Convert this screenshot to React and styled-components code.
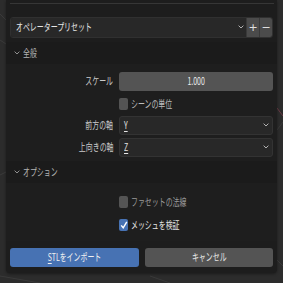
import React from 'react'
import styled, { createGlobalStyle } from 'styled-components'

const GlobalStyle = createGlobalStyle`
    html, body {
        margin: 0;
        padding: 0;
        background: #2b2b2b;
        font-family: "Noto Sans CJK JP", "Noto Sans", sans-serif;
        overflow: hidden;
    }
`;

const Viewport = styled.div`
    width: 283px;
    height: 283px;
    position: relative;
    background: #2c2c2c;
    overflow: hidden;
`;

const Grid = styled.svg`
    position: absolute;
    inset: 0;
`;

const Dialog = styled.div`
    position: relative;
    margin-left: 6px;
    width: 271px;
    height: 273px;
    background: #1d1d1d;
    border-radius: 0 0 4px 4px;
    display: flex;
    flex-direction: column;
    box-shadow: 0 1px 3px rgba(0, 0, 0, 0.4);
`;

const TopRule = styled.div`
    margin: 3px 3px 0 4px;
    height: 1px;
    background: #363636;
`;

const Text = styled.span`
    display: inline-block;
    font-size: 10.5px;
    line-height: 1;
    white-space: nowrap;
    color: ${p => p.$color || '#cacaca'};
    transform: scaleX(0.66);
    transform-origin: ${p => p.$origin || 'left'} center;
`;

const PresetRow = styled.div`
    margin: 13px 4px 0 4px;
    height: 19px;
    display: flex;
    border-radius: 3px;
    overflow: hidden;
    border: 1px solid #303030;
`;

const PresetField = styled.div`
    flex: 1;
    background: #282828;
    display: flex;
    align-items: center;
    padding-left: 5px;
    justify-content: space-between;
`;

const SmallButton = styled.div`
    width: 12px;
    background: #4b4b4b;
    border-left: 1px solid #3a3a3a;
    display: flex;
    align-items: center;
    justify-content: center;
    color: #e0e0e0;
    font-family: "DejaVu Sans", sans-serif;
    font-size: 11px;
`;

const Chevron = ({ size = 6, color = '#bdbdbd', gap = 3 }) => (
    <svg width={size} height={size * 0.7} viewBox="0 0 10 7" style={{ marginRight: gap }}>
        <path d="M1.5 1.5 L5 5 L8.5 1.5" fill="none" stroke={color} strokeWidth="1.6" strokeLinecap="round" />
    </svg>
);

const SectionHeader = styled.div`
    margin-top: ${p => p.$top || 0}px;
    height: 22px;
    display: flex;
    align-items: center;
    gap: 0;
    padding-left: 8px;
    background: #1b1b1b;
`;

const SectionBody = styled.div`
    background: #1e1e1e;
    padding: ${p => p.$pad || '0'};
    display: flex;
    flex-direction: column;
`;

const PropRow = styled.div`
    display: grid;
    grid-template-columns: 113px 1fr;
    align-items: center;
    height: 19px;
    margin-top: ${p => p.$top || 0}px;
    margin-right: 4px;
`;

const Label = styled.div`
    padding-right: 6px;
    display: flex;
    justify-content: flex-end;
`;

const NumField = styled.div`
    height: 19px;
    background: #545454;
    border-radius: 3px;
    display: flex;
    align-items: center;
    justify-content: center;
`;

const EnumField = styled.div`
    height: 17px;
    background: #282828;
    border: 1px solid #333;
    border-radius: 3px;
    display: flex;
    align-items: center;
    justify-content: space-between;
    padding-left: 4px;
`;

const Underlined = styled.span`
    text-decoration: underline;
    text-underline-offset: 2px;
`;

const CheckRow = styled.div`
    display: flex;
    align-items: center;
    gap: 3px;
    padding-left: 113px;
    height: 12px;
    margin-top: ${p => p.$top || 0}px;
`;

const Box = styled.div`
    width: 9px;
    height: 12px;
    border-radius: 2px;
    background: ${p => (p.$checked ? '#4772b3' : '#545454')};
    display: flex;
    align-items: center;
    justify-content: center;
`;

const Footer = styled.div`
    margin-top: auto;
    margin-bottom: 6px;
    padding: 0 4px;
    display: grid;
    grid-template-columns: 1fr 1fr;
    gap: 6px;
`;

const ActionButton = styled.div`
    height: 19px;
    border-radius: 3px;
    background: ${p => (p.$primary ? '#4772b3' : '#545454')};
    display: flex;
    align-items: center;
    justify-content: center;
`;

function App() {
    return (
        <>
            <GlobalStyle />
            <Viewport>
                <Grid width="283" height="283">
                    <path d="M0 14 L6 20 M0 40 L6 44 M0 175 L6 172 M0 276 L40 283 M150 276 L170 283 M277 130 L283 122 M277 260 L283 266" stroke="#3a3a3a" strokeWidth="1" />
                    <path d="M277 108 L283 116" stroke="#6a3a45" strokeWidth="1" />
                </Grid>
                <Dialog>
                    <TopRule />
                    <PresetRow>
                        <PresetField>
                            <Text $color="#e6e6e6">オペレータープリセット</Text>
                            <Chevron gap={2} />
                        </PresetField>
                        <SmallButton>+</SmallButton>
                        <SmallButton>−</SmallButton>
                    </PresetRow>

                    <SectionHeader $top={4}>
                        <Chevron color="#9a9a9a" />
                        <Text $color="#b4b4b4">全般</Text>
                    </SectionHeader>
                    <SectionBody $pad="8px 0 4px 0">
                        <PropRow>
                            <Label><Text $origin="right">スケール</Text></Label>
                            <NumField><Text $origin="center" $color="#ececec">1.000</Text></NumField>
                        </PropRow>
                        <CheckRow $top={7}>
                            <Box />
                            <Text $color="#bdbdbd">シーンの単位</Text>
                        </CheckRow>
                        <PropRow $top={6}>
                            <Label><Text $origin="right">前方の軸</Text></Label>
                            <EnumField>
                                <Text $color="#e6e6e6"><Underlined>Y</Underlined></Text>
                                <Chevron />
                            </EnumField>
                        </PropRow>
                        <PropRow $top={3}>
                            <Label><Text $origin="right">上向きの軸</Text></Label>
                            <EnumField>
                                <Text $color="#e6e6e6"><Underlined>Z</Underlined></Text>
                                <Chevron />
                            </EnumField>
                        </PropRow>
                    </SectionBody>

                    <SectionHeader>
                        <Chevron color="#9a9a9a" />
                        <Text $color="#b4b4b4">オプション</Text>
                    </SectionHeader>
                    <SectionBody $pad="13px 0 10px 0">
                        <CheckRow>
                            <Box />
                            <Text $color="#9a9a9a">ファセットの法線</Text>
                        </CheckRow>
                        <CheckRow $top={11}>
                            <Box $checked>
                                <svg width="8" height="8" viewBox="0 0 10 10">
                                    <path d="M1.5 5.5 L4 8.5 L8.5 1" fill="none" stroke="#fff" strokeWidth="1.8" />
                                </svg>
                            </Box>
                            <Text $color="#e6e6e6">メッシュを検証</Text>
                        </CheckRow>
                    </SectionBody>

                    <Footer>
                        <ActionButton $primary>
                            <Text $origin="center" $color="#f0f0f0"><Underlined>S</Underlined>TLをインポート</Text>
                        </ActionButton>
                        <ActionButton>
                            <Text $origin="center" $color="#e6e6e6">キャンセル</Text>
                        </ActionButton>
                    </Footer>
                </Dialog>
            </Viewport>
        </>
    )
}

export default App
